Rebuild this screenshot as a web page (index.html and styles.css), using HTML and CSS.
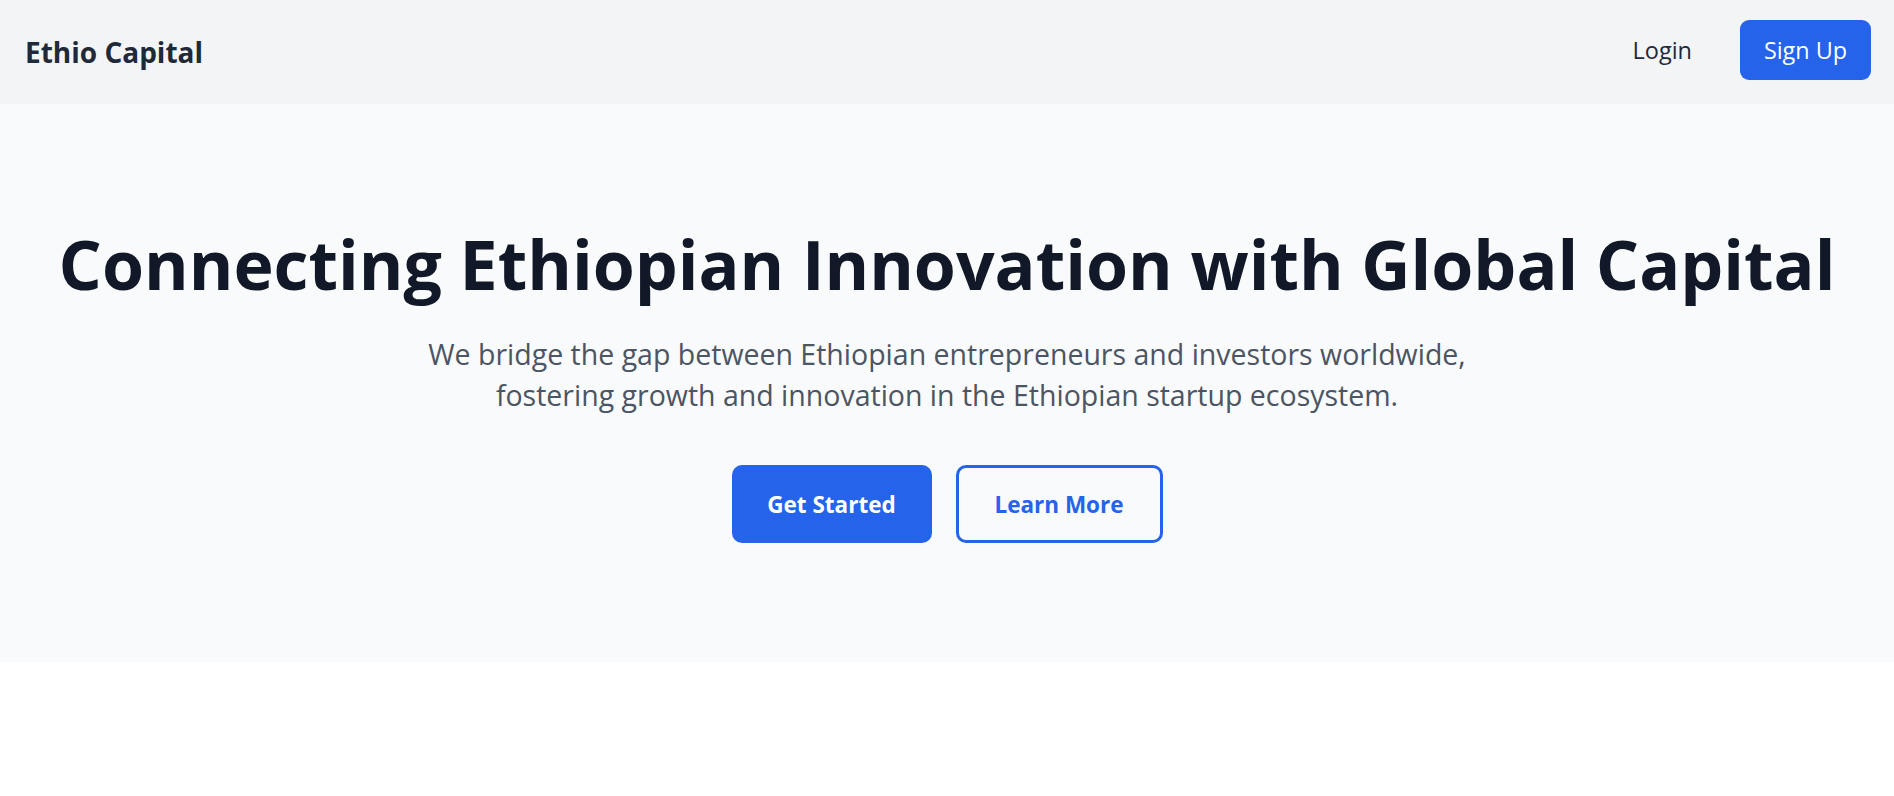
FILE: index.html
```html
<!DOCTYPE html>
<html lang="en">
<head>
<meta charset="utf-8">
<title>Ethio Capital</title>
<link rel="stylesheet" href="styles.css">
</head>
<body>
<header class="nav">
  <a class="logo" href="#">Ethio Capital</a>
  <div class="nav-actions">
    <a class="nav-login" href="#">Login</a>
    <a class="nav-signup" href="#">Sign Up</a>
  </div>
</header>
<section class="hero">
  <h1 class="hero-title">Connecting Ethiopian Innovation with Global Capital</h1>
  <p class="hero-sub">We bridge the gap between Ethiopian entrepreneurs and investors worldwide, fostering growth and innovation in the Ethiopian startup ecosystem.</p>
  <div class="hero-actions">
    <a class="btn btn-primary" href="#">Get Started</a>
    <a class="btn btn-outline" href="#">Learn More</a>
  </div>
</section>
</body>
</html>
```
FILE: styles.css
```css
* { box-sizing: border-box; }
body {
  margin: 0;
  font-family: "Open Sans", "Noto Sans", sans-serif;
  background: #ffffff;
}
a { text-decoration: none; }

.nav {
  height: 104px;
  background: #f3f4f6;
  display: flex;
  align-items: center;
  justify-content: space-between;
  padding: 0 23px 0 25px;
}
.logo {
  font-size: 28px;
  font-weight: 700;
  color: #1f2937;
}
.nav-actions {
  display: flex;
  align-items: center;
  gap: 48px;
  margin-bottom: 4px;
}
.nav-login {
  font-size: 23.5px;
  color: #1f2937;
}
.nav-signup {
  height: 60px;
  width: 131px;
  display: flex;
  align-items: center;
  justify-content: center;
  background: #2563eb;
  color: #ffffff;
  font-size: 23.4px;
  border-radius: 9px;
}

.hero {
  height: 558px;
  background: #f9fafb;
  padding-top: 124px;
  display: flex;
  flex-direction: column;
  align-items: center;
  text-align: center;
}
.hero-title {
  margin: 0;
  font-size: 68px;
  line-height: 72px;
  font-weight: 700;
  color: #111827;
}
.hero-sub {
  margin: 34px 0 0;
  max-width: 1080px;
  font-size: 28.5px;
  line-height: 41px;
  color: #4b5563;
}
.hero-actions {
  margin-top: 49px;
  display: flex;
  gap: 24px;
}
.btn {
  height: 78px;
  display: flex;
  align-items: center;
  justify-content: center;
  font-size: 22.5px;
  font-weight: 700;
  border-radius: 10px;
}
.btn-primary {
  width: 200px;
  background: #2563eb;
  color: #ffffff;
}
.btn-outline {
  width: 207px;
  border: 3px solid #2563eb;
  color: #2563eb;
}
```
